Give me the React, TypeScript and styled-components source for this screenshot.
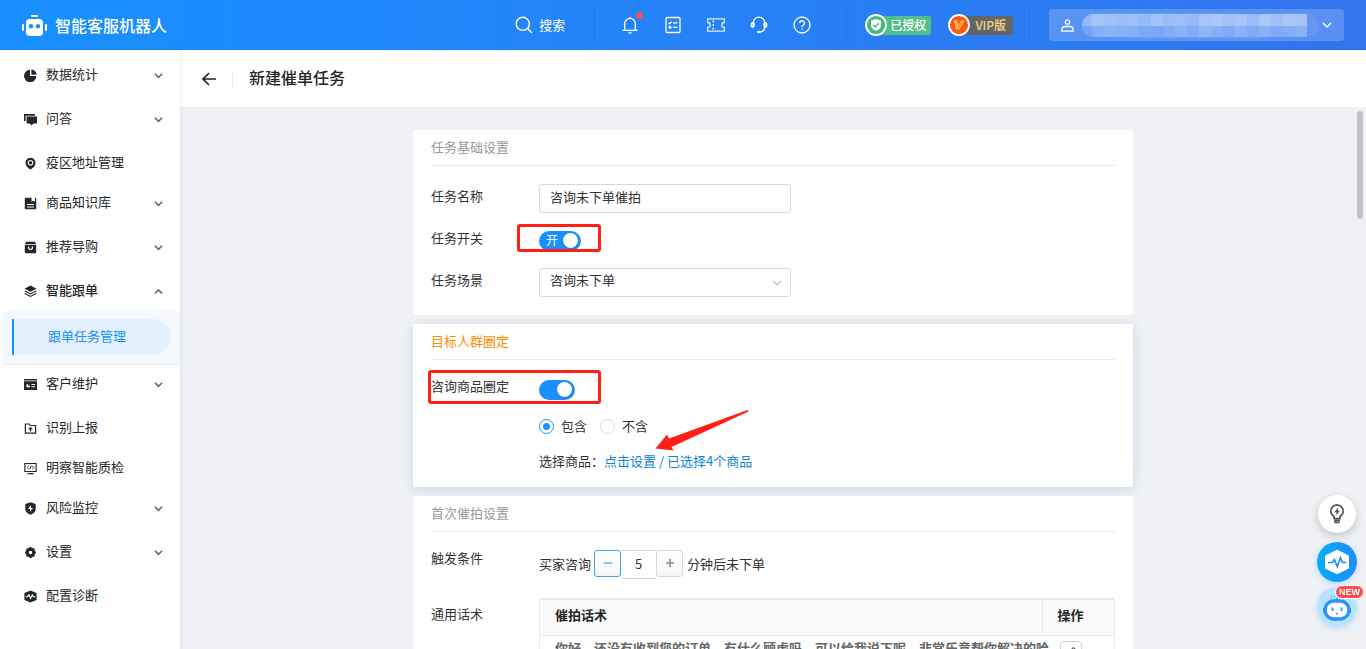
import React, { useState } from 'react';
import styled, { createGlobalStyle, css } from 'styled-components';

const GlobalStyle = createGlobalStyle`
  *, *::before, *::after { box-sizing: border-box; }
  body {
    margin: 0;
    font-family: "Noto Sans CJK SC", "Liberation Sans", sans-serif;
    font-size: 13px;
    line-height: 24px;
    color: #333;
    background: #eff1f5;
  }
  button, input, select { font: inherit; color: inherit; margin: 0; }
  button { cursor: pointer; }
`;

/* ---------- page frame ---------- */
const Page = styled.div`
  display: flex;
  flex-direction: column;
  height: 100vh;
  overflow: hidden;
`;
const Body = styled.div`
  display: flex;
  flex: 1;
  min-height: 0;
`;

/* ---------- top bar ---------- */
const TopBar = styled.header`
  display: flex;
  align-items: center;
  flex: none;
  height: 50px;
  padding: 0 22px;
  color: #fff;
  background: linear-gradient(90deg, #1890ff, #3274ee);
`;
const Brand = styled.a`
  display: flex;
  align-items: center;
  gap: 8px;
  margin-right: auto;
  font-size: 16px;
  font-weight: 500;
  color: #fff;
  text-decoration: none;
`;
const PlainButton = styled.button`
  display: flex;
  align-items: center;
  justify-content: center;
  padding: 0;
  border: 0;
  background: none;
`;
const SearchButton = styled(PlainButton)`
  gap: 6px;
`;
const BarDivider = styled.span<{ $before: number; $after: number }>`
  width: 1px;
  height: 36px;
  margin: 0 ${p => p.$after}px 0 ${p => p.$before}px;
  background: rgba(0, 40, 120, 0.1);
`;
const Tools = styled.nav`
  display: flex;
  gap: 23px;
`;
const ToolButton = styled(PlainButton)`
  position: relative;
  width: 20px;
  height: 20px;
`;
const AlertDot = styled.span`
  position: absolute;
  top: -3px;
  right: -3px;
  width: 7px;
  height: 7px;
  border-radius: 50%;
  background: #ff4d4f;
`;
const Plan = styled.span<{ $kind: 'auth' | 'vip' }>`
  display: flex;
  align-items: center;
  height: 19px;
  padding-right: ${p => (p.$kind === 'auth' ? 5 : 7)}px;
  border-radius: 11px 3px 3px 11px;
  font-size: 12px;
  font-weight: 500;
  color: ${p => (p.$kind === 'auth' ? '#fff' : '#f5d584')};
  background: ${p => (p.$kind === 'auth' ? '#52c087' : '#666564')};
  & + & { margin-left: 17px; }
  svg { flex: none; margin-right: ${p => (p.$kind === 'auth' ? 3 : 5)}px; }
`;
const UserBox = styled.button`
  display: flex;
  align-items: center;
  height: 32px;
  padding: 0 12px;
  border: 0;
  border-radius: 4px;
  background: rgba(255, 255, 255, 0.2);
  > svg { flex: none; }
  > svg:first-child { margin-right: 8px; }
  > svg:last-child { margin-left: 3px; }
`;

/* ---------- side menu ---------- */
const Side = styled.aside`
  flex: none;
  width: 180px;
  padding-top: 5px;
  background: #fff;
  box-shadow: 1px 0 4px rgba(0, 20, 60, 0.08);
  z-index: 1;
`;
const MenuItem = styled.a<{ $group?: boolean; $open?: boolean }>`
  display: flex;
  align-items: center;
  height: 40px;
  margin-bottom: ${p => (p.$group && !p.$open ? 4 : 0)}px;
  padding: 0 17px 0 24px;
  color: #262626;
  font-weight: ${p => (p.$open ? 500 : 400)};
  text-decoration: none;
  > svg:first-child { margin-right: 9px; }
  > span { flex: 1; padding-bottom: 2px; }
`;
const SubMenu = styled.div`
  height: 54px;
  margin: 0 0 -1px 3px;
  padding: 8px 9px;
  border-bottom: 1px solid #e3eef9;
  background: #f5f9fd;
`;
const SubItem = styled.a`
  display: block;
  padding: 0 0 2px 34px;
  border-left: 2px solid #1890ff;
  border-radius: 0 18px 18px 0;
  line-height: 34px;
  color: #1890ff;
  background: #e3f0fe;
  text-decoration: none;
`;

/* ---------- main column ---------- */
const Main = styled.main`
  display: flex;
  flex: 1;
  flex-direction: column;
  min-width: 0;
`;
const PageHead = styled.div`
  display: flex;
  align-items: center;
  flex: none;
  height: 57px;
  padding-left: 20px;
  background: #fff;
`;
const PageTitle = styled.h1`
  margin: 0;
  padding: 0 0 4px 16px;
  font-size: 16px;
  font-weight: 500;
  color: #262626;
`;
const HeadDivider = styled.span`
  width: 1px;
  height: 16px;
  margin-left: 14px;
  background: #e8e8e8;
`;
const Scroller = styled.div`
  position: relative;
  flex: 1;
  min-height: 0;
  overflow: hidden;
  padding-top: 23px;
`;
const ScrollThumb = styled.div`
  position: absolute;
  top: 4px;
  right: 3px;
  width: 6px;
  height: 108px;
  border-radius: 3px;
  background: #c1c3c7;
`;
const Form = styled.form`
  display: flex;
  flex-direction: column;
  gap: 9px;
  max-width: 720px;
  margin: 0 auto;
`;
const Card = styled.section<{ $active?: boolean }>`
  padding: 0 18px;
  border-radius: 2px;
  background: #fff;
  ${p => p.$active && css`box-shadow: 0 2px 12px rgba(60, 120, 180, 0.22);`}
`;
const CardTitle = styled.h2<{ $active?: boolean }>`
  margin: 0;
  padding-bottom: 2px;
  border-bottom: 1px solid #ebebeb;
  font-size: 13px;
  font-weight: 400;
  line-height: 33px;
  color: ${p => (p.$active ? '#ff8c00' : '#999')};
`;
const Rows = styled.div<{ $gap: number; $pad: number }>`
  display: flex;
  flex-direction: column;
  gap: ${p => p.$gap}px;
  padding: ${p => p.$pad}px 0;
`;
const Row = styled.div<{ $text?: boolean }>`
  display: grid;
  grid-template-columns: 108px 1fr;
  position: relative;
  min-height: ${p => (p.$text ? 24 : 29)}px;
`;
const RowLabel = styled.label``;
const Control = styled.div<{ $drop?: number }>`
  min-width: 0;
  padding-top: ${p => p.$drop ?? 0}px;
`;
const field = css`
  display: block;
  width: 252px;
  height: 29px;
  padding: 0 10px 5px;
  border: 1px solid #d9d9d9;
  border-radius: 3px;
  line-height: 22px;
  background: #fff;
  outline: 0;
`;
const TextField = styled.input`${field}`;
const SelectWrap = styled.div`
  position: relative;
  width: 252px;
  svg { position: absolute; right: 9px; top: 10px; pointer-events: none; }
`;
const SelectField = styled.select`
  ${field}
  appearance: none;
`;

const SwitchBox = styled.label<{ $wide?: boolean }>`
  position: relative;
  display: flex;
  align-items: center;
  width: ${p => (p.$wide ? 42 : 36)}px;
  height: 20px;
  padding: 0 3px 2px 7px;
  border-radius: 10px;
  font-size: 12px;
  line-height: 18px;
  color: #fff;
  background: #1890ff;
  &::after {
    content: "";
    width: 15px;
    height: 15px;
    margin: 1px 0 0 auto;
    border-radius: 50%;
    background: #fff;
    box-shadow: 0 1px 2px rgba(0, 30, 80, 0.25);
  }
  &:has(input:not(:checked)) { background: #bfbfbf; }
`;
const SwitchInput = styled.input`
  position: absolute;
  inset: 0;
  opacity: 0;
`;

const Choices = styled.div`
  display: flex;
  gap: 13px;
`;
const Choice = styled.label`
  display: flex;
  align-items: center;
  gap: 7px;
`;
const Radio = styled.input`
  appearance: none;
  width: 15px;
  height: 15px;
  border: 1px solid #d9d9d9;
  border-radius: 50%;
  background: #fff;
  &:checked {
    border-color: #1890ff;
    background: radial-gradient(circle, #1890ff 3px, #fff 4px);
  }
`;
const PickLink = styled.a`
  color: #0a86dc;
  text-decoration: none;
`;

/* callouts drawn over the form */
const Mark = styled.span<{ $left: number; $top: number; $w: number; $h: number }>`
  position: absolute;
  left: ${p => p.$left}px;
  top: ${p => p.$top}px;
  width: ${p => p.$w}px;
  height: ${p => p.$h}px;
  border: 3px solid #ff1f14;
  border-radius: 3px;
  pointer-events: none;
`;
const Arrow = styled.svg`
  position: absolute;
  left: 223px;
  top: -6px;
  overflow: visible;
  pointer-events: none;
`;

const Stepper = styled.div`
  display: flex;
  align-items: flex-start;
  line-height: 27px;
`;
const StepButton = styled.button<{ $focus?: boolean }>`
  display: flex;
  align-items: center;
  justify-content: center;
  width: 27px;
  height: 27px;
  padding: 0 0 2px;
  border: 1px solid ${p => (p.$focus ? '#409eff' : '#d9d9d9')};
  border-radius: 3px;
  background: linear-gradient(#fff, #f5f5f5);
  &:first-of-type { margin-left: 3px; }
  &:last-of-type { margin-right: 4px; }
`;
const StepInput = styled.input`
  width: 35px;
  height: 29px;
  padding: 0 0 2px;
  border: 1px solid #d9d9d9;
  border-width: 1px 0;
  text-align: center;
  outline: 0;
`;

const TableFrame = styled.div`
  border: 1px solid #e8e8e8;
  border-top-width: 2px;
  border-radius: 4px 4px 0 0;
`;
const Table = styled.table`
  width: 100%;
  border-collapse: collapse;
  table-layout: fixed;
`;
const Th = styled.th<{ $w?: number }>`
  width: ${p => (p.$w ? `${p.$w}px` : 'auto')};
  height: 35px;
  padding: 0 15px 5px;
  border-bottom: 1px solid #e8e8e8;
  text-align: left;
  font-weight: 700;
  color: #262626;
  background: #fafafa;
  & + & { border-left: 1px solid #e8e8e8; }
`;
const Td = styled.td<{ $action?: boolean }>`
  height: 60px;
  padding: ${p => (p.$action ? '5px 18px' : '0 0 0 15px')};
  vertical-align: top;
  white-space: nowrap;
  font-weight: 700;
  color: #666;
`;
const EditButton = styled.button`
  display: flex;
  align-items: center;
  justify-content: center;
  width: 22px;
  height: 22px;
  padding: 0;
  border: 1px solid #d0d0d0;
  border-radius: 4px;
  background: #fff;
`;

/* ---------- floating helpers ---------- */
const Floaters = styled.div`
  position: fixed;
  right: 9px;
  bottom: 22px;
  display: flex;
  flex-direction: column;
  align-items: center;
  gap: 5px;
  z-index: 2;
`;
const Floater = styled.button<{ $kind: 'tip' | 'check' | 'bot' }>`
  position: relative;
  display: flex;
  align-items: center;
  justify-content: center;
  width: 40px;
  height: 40px;
  padding: 0;
  border: 0;
  border-radius: 50%;
  ${p => p.$kind === 'tip' && css`
    width: 38px;
    height: 38px;
    margin-bottom: 4px;
    background: #fff;
    box-shadow: 0 3px 9px rgba(0, 0, 0, 0.2);
  `}
  ${p => p.$kind === 'check' && css`
    background: linear-gradient(90deg, #06aef5, #1f8cff);
    box-shadow: 0 2px 6px rgba(24, 144, 255, 0.25);
  `}
  ${p => p.$kind === 'bot' && css`
    background: #b8e3ff;
    box-shadow: 0 2px 6px rgba(24, 144, 255, 0.18);
  `}
`;
const NewBadge = styled.span`
  position: absolute;
  top: -2px;
  right: -7px;
  padding: 0 3px;
  border: 1px solid #fff;
  border-radius: 7px;
  font: 700 9px/12px "Liberation Sans", sans-serif;
  color: #fff;
  background: #ff4d4f;
`;

/* ---------- icons ---------- */
const Chevron = ({ up, color = '#666', size = 9, w = 1.8 }: { up?: boolean; color?: string; size?: number; w?: number }) => (
  <svg width={size} height={size} viewBox="0 0 10 10" fill="none" stroke={color} strokeWidth={w}>
    <path d={up ? 'M1 7.2 5 3.2 9 7.2' : 'M1 3 5 7 9 3'} />
  </svg>
);

const BrandIcon = () => (
  <svg width="25" height="21" viewBox="0 0 25 21" fill="#fff">
    <rect x="9" y="0" width="7" height="2" rx="1" />
    <rect x="4" y="4" width="17" height="17" rx="4" />
    <rect x="0" y="9" width="2" height="7" rx="1" />
    <rect x="23" y="9" width="2" height="7" rx="1" />
    <circle cx="9" cy="11.3" r="2.2" fill="#1c8efe" />
    <circle cx="16" cy="11.3" r="2.2" fill="#1c8efe" />
  </svg>
);

const Line = ({ children }: { children: React.ReactNode }) => (
  <svg width="20" height="20" viewBox="0 0 20 20" fill="none" stroke="#fff" strokeWidth="1.3">{children}</svg>
);

const menuIcons: Record<string, React.ReactNode> = {
  chart: <><path d="M6 .8v6.3h6.4A6.2 6.2 0 1 1 6 .8z" /><path d="M7.4.6a6 6 0 0 1 5.2 5.2H7.4z" /></>,
  chat: <><path d="M0 1h11v1.7H1.6V8H0z" /><path d="M2.6 3.6h10.4v7H9.4L7.6 12.4 5.9 10.6H2.6z" /></>,
  pin: <path fillRule="evenodd" d="M6.5.8a5 5 0 0 1 5 5c0 3.200-2.300 5.300-5 6.700-2.700-1.400-5-3.500-5-6.700a5 5 0 0 1 5-5zm0 2.200a2.800 2.800 0 1 0 0 5.600 2.800 2.800 0 0 0 0-5.600zm0 1a1.800 1.800 0 1 1 0 3.600 1.800 1.800 0 0 1 0-3.600z" />,
  book: <path fillRule="evenodd" d="M1.800.8h5.700v4l1.700-1 1.700 1v-4h1.300v11.500H1.800a1 1 0 0 1-1-1V1.800a1 1 0 0 1 1-1zM3 7v1h7V7zm0 2.400v1h7v-1z" />,
  bag: <path fillRule="evenodd" d="M2.300.8h8.400l1.500 2.100H.8zM.8 3.800h11.400v7.400a1 1 0 0 1-1 1H1.800a1 1 0 0 1-1-1zM4 5.400v1.200a2.500 2.500 0 0 0 5 0V5.400H7.800v1.200a1.300 1.300 0 0 1-2.600 0V5.400z" />,
  layers: <><path d="M6.500.6 12.500 3.700 6.500 6.800.5 3.700z" /><path d="m.7 6 5.800 3 5.800-3M.7 8.500l5.800 3 5.800-3" fill="none" stroke="#262626" strokeWidth="1.100" /></>,
  card: <path fillRule="evenodd" d="M0 1h13v1.500H0zM0 3.300h13V12H0zm2.500 3v3H6v-1.500H4.200V6.300zM7.500 6v1H11V6zm0 2.300v1H11v-1z" />,
  folder: <g fill="none" stroke="#262626" strokeWidth="1.200"><path d="M1.400 2h3.800l1.200 1.500h5.200v7.700H1.400z" /><path d="M6.500 9.500V5.500M4.700 7.400l1.800-1.800 1.800 1.800" /></g>,
  monitor: <g fill="none" stroke="#262626" strokeWidth="1.200"><path d="M.9 1.500h11.200v8H.9zM3.500 11.700h6" /><path d="M4.800 3.900 3.200 5.500l1.600 1.600M8.200 3.900l1.600 1.600-1.600 1.600M7.200 3.700 5.800 7.300" strokeWidth="1" /></g>,
  shield: <path fillRule="evenodd" d="M6.500.3 11.700 2v5c0 2.800-2.300 4.600-5.200 5.800C3.600 11.600 1.300 9.800 1.300 7V2zM7 3 4 7h2v3l3-4H7z" />,
  gear: <path fillRule="evenodd" d="m6.500.8 1.800 1.300 2.200.3.300 2.200 1.300 1.900-1.300 1.900-.3 2.200-2.200.3-1.800 1.300-1.800-1.300-2.200-.3-.3-2.200L.9 6.500l1.300-1.900.3-2.200 2.200-.3zm0 4a1.700 1.700 0 1 0 0 3.400 1.700 1.700 0 0 0 0-3.400z" />,
  pulse: <><path d="M6.500.4 12.600 3v7l-6.100 2.600L.4 10V3z" /><path d="M1.700 6.700h1.800l1.500-1.800 1.600 3.600 1.700-3.600 1 1.800h2" fill="none" stroke="#fff" strokeWidth="1.100" /></>,
};
const MenuIcon = ({ name }: { name: string }) => (
  <svg width="13" height="13" viewBox="0 0 13 13" fill="#262626">{menuIcons[name]}</svg>
);

/* the account name is masked by a mosaic of translucent tiles */
const tilesTop = [0.36, 0.42, 0.38, 0.35, 0.36, 0.32, 0.4, 0.33, 0.36, 0.31, 0.43, 0.46, 0.4, 0.43, 0.35, 0.45, 0.38, 0.45, 0.42];
const tilesLow = [0.16, 0.2, 0.25, 0.22, 0.2, 0.16, 0.13, 0.19, 0.25, 0.18, 0.28, 0.22, 0.17, 0.25, 0.18, 0.23, 0.18, 0.2, 0.25];
const NameMask = () => (
  <svg width="237" height="27" viewBox="0 0 237 27" fill="#fff" aria-hidden="true">
    <defs><clipPath id="pill"><rect y="2" width="250" height="23" rx="11" /></clipPath></defs>
    <path d="M8 5Q14 1 30 1H130L180 3 190 1H224Q237 4 237 14T222 24H192L175 27H60L40 25H12Z" opacity=".08" />
    <g clipPath="url(#pill)">
      {tilesTop.map((o, i) => <rect key={i} x={i * 12 - 3} y="2" width="12" height="12" opacity={o} />)}
      {tilesLow.map((o, i) => <rect key={i} x={i * 12 - 3} y="14" width="12" height="11" opacity={o} />)}
    </g>
  </svg>
);

const menuTop = [
  { icon: 'chart', text: '数据统计', group: true },
  { icon: 'chat', text: '问答', group: true },
  { icon: 'pin', text: '疫区地址管理' },
  { icon: 'book', text: '商品知识库', group: true },
  { icon: 'bag', text: '推荐导购', group: true },
  { icon: 'layers', text: '智能跟单', group: true, open: true },
];
const menuRest = [
  { icon: 'card', text: '客户维护', group: true },
  { icon: 'folder', text: '识别上报' },
  { icon: 'monitor', text: '明察智能质检' },
  { icon: 'shield', text: '风险监控', group: true },
  { icon: 'gear', text: '设置', group: true },
  { icon: 'pulse', text: '配置诊断' },
];
type Entry = { icon: string; text: string; group?: boolean; open?: boolean };
const Menu = ({ entries }: { entries: Entry[] }) => (
  <>
    {entries.map(e => (
      <MenuItem key={e.text} href="#" $group={e.group} $open={e.open}>
        <MenuIcon name={e.icon} />
        <span>{e.text}</span>
        {e.group && <Chevron up={e.open} />}
      </MenuItem>
    ))}
  </>
);

const Header = () => (
  <TopBar>
    <Brand href="#"><BrandIcon />智能客服机器人</Brand>
    <SearchButton>
      <svg width="18" height="18" viewBox="0 0 18 18" fill="none" stroke="#fff" strokeWidth="1.400"><circle cx="7.800" cy="7.800" r="6.600" /><path d="m12.500 12.500 4.500 4.500" /></svg>
      搜索
    </SearchButton>
    <BarDivider $before={29} $after={25} />
    <Tools>
      <ToolButton aria-label="消息">
        <Line><path d="M2.500 15.400h15M4.700 15.400V8.700a5.300 5.300 0 0 1 10.600 0v6.700M8.300 17.900h3.400M10 3.400V1.900" /></Line>
        <AlertDot />
      </ToolButton>
      <ToolButton aria-label="任务">
        <Line><rect x="3" y="2.500" width="14" height="15" rx="1" /><path d="m5.500 7.700 1.200 1.100 1.800-2M10 7.800h4.500" /><circle cx="7" cy="12.300" r="1" /><path d="M10 12.300h4.500" /></Line>
      </ToolButton>
      <ToolButton aria-label="卡券">
        <Line><path d="M1.700 3.800h16.600v3.700a2.500 2.500 0 0 0 0 5v3.700H1.700v-3.700a2.500 2.500 0 0 0 0-5z" strokeOpacity=".85" /><path d="M7.300 5.500v9.500" strokeDasharray="2 1.500" /></Line>
      </ToolButton>
      <ToolButton aria-label="客服">
        <Line><path d="M4.300 12V7.800a5.700 5.700 0 0 1 11.400 0V12c0 3-1.700 4.600-4.500 5" /><rect x="2.300" y="8" width="2.700" height="4" rx="1" fill="#fff" fillOpacity=".5" /><rect x="15" y="8" width="2.700" height="4" rx="1" fill="#fff" fillOpacity=".5" /><path d="M8.200 17h3.300" strokeWidth="2.200" /></Line>
      </ToolButton>
      <ToolButton aria-label="帮助">
        <Line><circle cx="10" cy="10" r="8" /><path d="M7.600 8.200a2.400 2.400 0 1 1 3.700 2c-.8.500-1.300.9-1.300 1.900M10 13.400v1.400" /></Line>
      </ToolButton>
    </Tools>
    <BarDivider $before={34} $after={18} />
    <Plan $kind="auth">
      <svg width="22" height="22" viewBox="0 0 22 22"><circle cx="11" cy="11" r="10" fill="#43b97f" stroke="#fff" strokeWidth="1.800" /><path d="M11 5 16 6.500v5c0 2.700-2.300 4.200-5 5.300-2.700-1.100-5-2.600-5-5.300v-5z" fill="#fff" /><path d="m8.400 10.800 2 1.900 3.400-3.500" fill="none" stroke="#43b97f" strokeWidth="1.500" /></svg>
      已授权
    </Plan>
    <Plan $kind="vip">
      <svg width="22" height="22" viewBox="0 0 22 22"><circle cx="11" cy="11" r="10" fill="#fa5a14" stroke="#fff" strokeWidth="1.800" /><path d="M5.800 6.500h3.400l1.100 5.200 2.700-5.200h3.600L11 16H8.300z" fill="#ffc65c" /><path d="M9.300 16 14.500 6.500" stroke="#fa5a14" strokeWidth=".8" /></svg>
      VIP版
    </Plan>
    <BarDivider $before={16} $after={19} />
    <UserBox aria-label="账号">
      <svg width="13" height="13" viewBox="0 0 13 13" fill="none" stroke="#fff" strokeWidth="1.300"><circle cx="6.500" cy="3" r="2.200" /><path d="M.8 12.200v-1.500q0-3.200 3.200-3.200h5q3.200 0 3.200 3.200v1.500z" /></svg>
      <NameMask />
      <Chevron color="#fff" size={10} w={1.4} />
    </UserBox>
  </TopBar>
);

export default function App() {
  const [name, setName] = useState('咨询未下单催拍');
  const [minutes, setMinutes] = useState(5);
  return (
    <Page>
      <GlobalStyle />
      <Header />
      <Body>
        <Side>
          <Menu entries={menuTop} />
          <SubMenu><SubItem href="#">跟单任务管理</SubItem></SubMenu>
          <Menu entries={menuRest} />
        </Side>
        <Main>
          <PageHead>
            <PlainButton aria-label="返回">
              <svg width="18" height="18" viewBox="0 0 18 18" fill="none" stroke="#262626" strokeWidth="1.700"><path d="M16 9H3M9 3 3 9l6 6" /></svg>
            </PlainButton>
            <HeadDivider />
            <PageTitle>新建催单任务</PageTitle>
          </PageHead>
          <Scroller>
            <ScrollThumb />
            <Form>
              <Card>
                <CardTitle>任务基础设置</CardTitle>
                <Rows $gap={13} $pad={18}>
                  <Row>
                    <RowLabel htmlFor="name">任务名称</RowLabel>
                    <TextField id="name" value={name} onChange={e => setName(e.target.value)} />
                  </Row>
                  <Row>
                    <RowLabel htmlFor="enabled">任务开关</RowLabel>
                    <Control $drop={5}>
                      <SwitchBox $wide>
                        <SwitchInput id="enabled" type="checkbox" defaultChecked />开
                      </SwitchBox>
                    </Control>
                    <Mark $left={86} $top={-2} $w={84} $h={28} />
                  </Row>
                  <Row>
                    <RowLabel htmlFor="scene">任务场景</RowLabel>
                    <SelectWrap>
                      <SelectField id="scene"><option>咨询未下单</option></SelectField>
                      <Chevron color="#bfbfbf" size={10} w={1.2} />
                    </SelectWrap>
                  </Row>
                </Rows>
              </Card>

              <Card $active>
                <CardTitle $active>目标人群圈定</CardTitle>
                <Rows $gap={11} $pad={14}>
                  <Row>
                    <RowLabel htmlFor="goods">咨询商品圈定</RowLabel>
                    <Control $drop={6}>
                      <SwitchBox><SwitchInput id="goods" type="checkbox" defaultChecked /></SwitchBox>
                    </Control>
                    <Mark $left={-3} $top={-4} $w={173} $h={34} />
                  </Row>
                  <Row $text>
                    <span />
                    <Control>
                      <Choices>
                        <Choice><Radio type="radio" name="range" defaultChecked />包含</Choice>
                        <Choice><Radio type="radio" name="range" />不含</Choice>
                      </Choices>
                    </Control>
                    <Arrow width="96" height="44" viewBox="0 0 96 44" fill="#ff1f14">
                      <path d="M1.500 40.500 13 26.500 15 30.500 93.500 2Q95 2.300 94 3.800L17.500 39 19.500 42.500Z" />
                    </Arrow>
                  </Row>
                  <Row $text>
                    <span />
                    <Control>选择商品：<PickLink href="#">点击设置 / 已选择4个商品</PickLink></Control>
                  </Row>
                </Rows>
              </Card>

              <Card>
                <CardTitle>首次催拍设置</CardTitle>
                <Rows $gap={19} $pad={14}>
                  <Row>
                    <RowLabel htmlFor="minutes">触发条件</RowLabel>
                    <Control $drop={4}>
                      <Stepper>
                        买家咨询
                        <StepButton type="button" $focus aria-label="减少" onClick={() => setMinutes(minutes - 1)}>
                          <svg width="10" height="10" viewBox="0 0 10 10" stroke="#91caff" strokeWidth="2"><path d="M.5 5h9" /></svg>
                        </StepButton>
                        <StepInput id="minutes" value={minutes} onChange={e => setMinutes(Number(e.target.value) || 0)} />
                        <StepButton type="button" aria-label="增加" onClick={() => setMinutes(minutes + 1)}>
                          <svg width="10" height="10" viewBox="0 0 10 10" stroke="#8c8c8c" strokeWidth="1.600"><path d="M1 5h8M5 1v8" /></svg>
                        </StepButton>
                        分钟后未下单
                      </Stepper>
                    </Control>
                  </Row>
                  <Row>
                    <Control as="span" $drop={4}>通用话术</Control>
                    <TableFrame>
                      <Table>
                        <thead><tr><Th>催拍话术</Th><Th $w={72}>操作</Th></tr></thead>
                        <tbody>
                          <tr>
                            <Td>你好，还没有收到您的订单，有什么顾虑吗，可以给我说下呢，非常乐意帮你解决的哈</Td>
                            <Td $action>
                              <EditButton type="button" aria-label="编辑">
                                <svg width="12" height="12" viewBox="0 0 12 12" fill="none" stroke="#666" strokeWidth="1.200"><path d="M1.500 10.500 2 8l6.500-6.500 2 2L4 10z" /></svg>
                              </EditButton>
                            </Td>
                          </tr>
                        </tbody>
                      </Table>
                    </TableFrame>
                  </Row>
                </Rows>
              </Card>
            </Form>
          </Scroller>
        </Main>
      </Body>

      <Floaters>
        <Floater $kind="tip" aria-label="提示">
          <svg width="16" height="20" viewBox="0 0 16 20" fill="none" stroke="#555" strokeWidth="1.700"><path d="M5 14.500v-2A6.200 6.200 0 1 1 11 12.500v2zM5 16.300h6M5.300 18.300h5.400" /><path d="M8.900 3.500 5.300 8.200h2.100v3.100l3.400-4.500H8.700z" fill="#555" stroke="none" /></svg>
        </Floater>
        <Floater $kind="check" aria-label="诊断">
          <svg width="26" height="26" viewBox="0 0 26 26"><path d="M13 .8 24 6q1 .5 1 1.500v11q0 1-1 1.500l-11 5.200L2 20q-1-.5-1-1.500v-11Q1 6.500 2 6z" fill="#fff" /><path d="M3.800 13.500h4.700l1.900-2.800 3 7 3-9 2 4.800h3.800" fill="none" stroke="#1890ff" strokeWidth="1.700" /></svg>
        </Floater>
        <Floater $kind="bot" aria-label="助手">
          <svg width="28" height="30" viewBox="0 0 28 30"><path d="M8.500 3v5M11.300 4v3" stroke="#7cc4fb" strokeWidth="1.200" /><path d="M12 9 14 5l2 4z" fill="#2c93fb" /><rect x="2" y="9" width="24" height="18" rx="9" fill="#fff" stroke="#2c93fb" strokeWidth="3.400" /><path d="M0 16v5M28 16v5" stroke="#2c93fb" strokeWidth="2" /><path d="M9.500 15.500v3.500M18.500 15.500v3.500" stroke="#2c93fb" strokeWidth="1.800" /><path d="M12.500 21h3L14 23z" fill="#2c93fb" /></svg>
          <NewBadge>NEW</NewBadge>
        </Floater>
      </Floaters>
    </Page>
  );
}
